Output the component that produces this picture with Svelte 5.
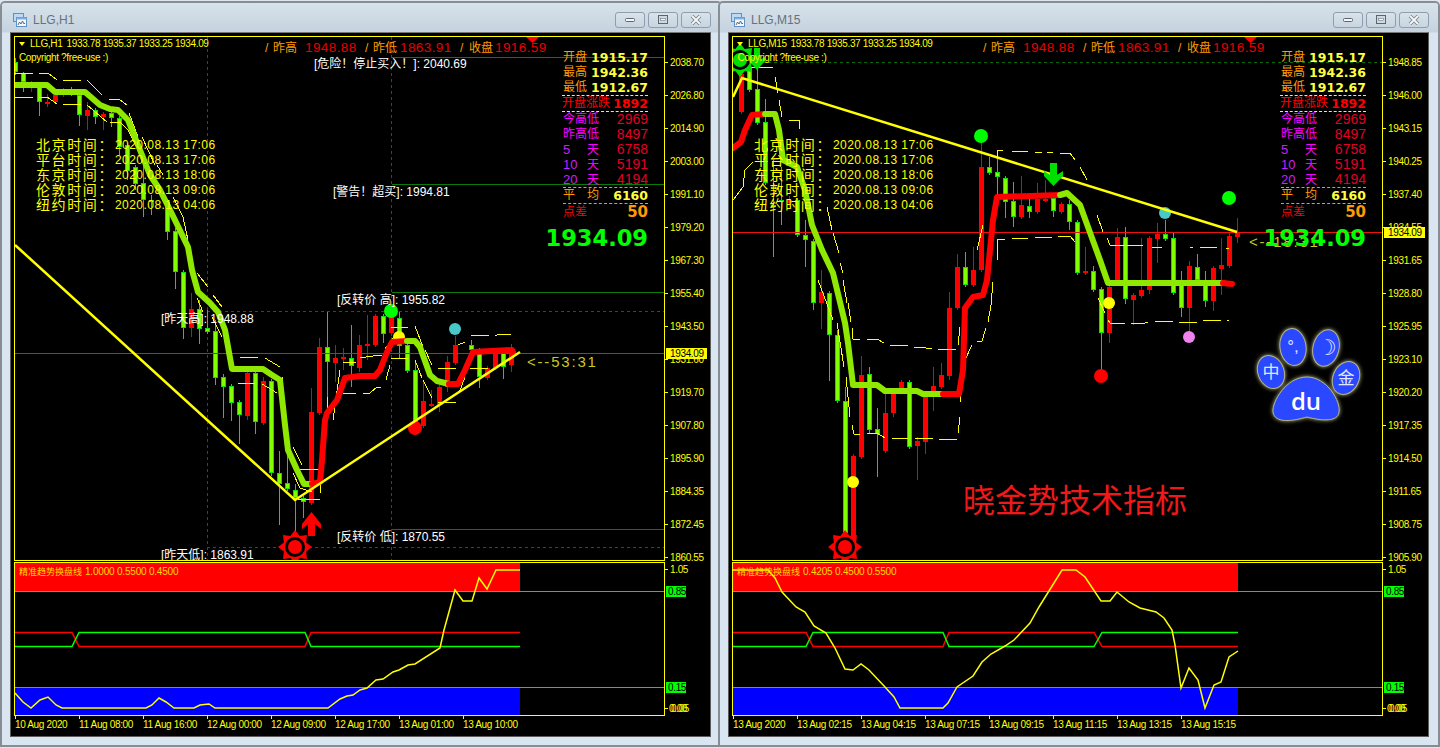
<script lang="ts">
  // MT4 style twin chart windows. Series use page coordinates, the right one is shifted back by 718.
  const statRows = [
    { label: '开盘', value: '1915.17', kind: 'ohlc' },
    { label: '最高', value: '1942.36', kind: 'ohlc' },
    { label: '最低', value: '1912.67', kind: 'ohlc' },
    { label: '开盘涨跌', value: '1892', kind: 'gap' },
    { label: '今高低', value: '2969', kind: 'range' },
    { label: '昨高低', value: '8497', kind: 'range' },
    { num: '5', label: '天', value: '6758', kind: 'range' },
    { num: '10', label: '天', value: '5191', kind: 'range' },
    { num: '20', label: '天', value: '4194', kind: 'range' },
    { num: '平', label: '均', value: '6160', kind: 'avg' },
    { label: '点差', value: '50', kind: 'spread' }
  ];

  const clockRows = [
    ['北京时间：', '2020.08.13 17:06'],
    ['平台时间：', '2020.08.13 17:06'],
    ['东京时间：', '2020.08.13 18:06'],
    ['伦敦时间：', '2020.08.13 09:06'],
    ['纽约时间：', '2020.08.13 04:06']
  ];

  // [colour, x, bodyTop, bodyBottom, wickTop, wickBottom]
  const leftCandles = [
    ['g',15,62,72,58,75],['g',23,73,82,72,92],['r',31,85,86,81,92],['g',39,84,102,82,116],['r',47,102,103,94,107],
    ['r',55,95,102,92,104],['r',63,91,92,88,97],['g',71,91,92,87,96],['g',79,95,115,93,126],['r',87,110,116,102,130],
    ['g',95,110,117,108,124],['r',103,114,117,112,130],['g',111,113,118,111,127],['g',119,118,147,116,155],['g',127,145,171,143,180],
    ['g',135,167,184,165,190],['g',143,183,200,160,217],['g',151,200,202,195,215],['g',167,202,232,200,240],['g',175,231,272,228,289],
    ['g',183,272,328,270,339],['r',191,309,328,293,337],['g',199,309,329,300,344],['g',207,328,332,310,334],['g',215,331,378,320,385],
    ['g',223,377,387,374,418],['g',231,386,403,384,421],['g',239,402,415,400,444],['r',247,373,416,371,420],['g',255,373,422,371,434],
    ['r',263,381,423,377,425],['g',271,381,473,379,476],['g',279,473,484,451,525],['g',287,483,489,451,491],['g',295,490,498,484,540],
    ['g',303,498,502,496,518],['r',311,412,503,388,505],['r',319,347,413,338,415],['g',327,347,362,312,415],['r',335,358,363,345,382],
    ['r',343,357,359,348,370],['g',351,358,366,325,387],['r',359,345,368,335,372],['r',367,344,346,315,360],['r',375,316,345,314,347],
    ['g',383,316,334,314,343],['r',391,316,333,314,336],['g',399,318,346,312,358],['g',407,345,371,343,373],['g',415,370,422,360,424],
    ['r',423,401,426,382,428],['r',431,404,406,390,407],['r',439,387,405,385,412],['r',447,362,387,356,392],['r',455,345,363,336,365],
    ['g',471,345,350,340,352],['g',479,350,377,348,388],['r',487,368,378,366,380],['r',495,353,368,351,370],['g',503,353,367,351,379],
    ['r',511,349,365,344,372]
  ];

  const rightCandles = [
    ['r',741,74,112,70,114],['g',749,67,90,55,92],['g',757,89,123,48,125],['g',765,122,183,99,185],['g',773,205,207,160,257],
    ['g',781,200,202,167,225],['r',789,200,203,196,205],['g',797,200,235,198,237],['g',805,235,240,220,267],['g',813,241,303,239,310],
    ['r',821,292,303,270,329],['g',829,293,335,291,381],['g',837,335,401,330,403],['g',845,401,533,387,535],['r',853,456,540,454,542],
    ['r',861,375,457,356,459],['g',869,374,430,367,434],['g',877,429,434,408,477],['r',885,413,451,393,453],['r',893,393,413,391,417],
    ['r',901,382,388,380,390],['g',909,382,447,380,449],['r',917,441,446,437,480],['r',925,397,442,395,454],['r',933,386,391,367,411],
    ['r',941,375,387,363,389],['r',949,308,376,292,380],['r',957,267,308,254,310],['g',965,267,285,252,287],['r',973,270,285,247,287],
    ['r',981,167,270,143,272],['g',989,167,173,157,175],['g',997,172,177,157,195],['g',1005,178,202,176,218],['g',1013,201,217,182,227],
    ['r',1021,205,217,176,219],['g',1029,206,212,197,218],['r',1037,199,212,183,214],['r',1045,199,200,180,202],['g',1053,198,211,196,217],
    ['r',1061,204,212,202,214],['g',1069,204,222,200,230],['g',1077,222,273,220,275],['r',1085,271,273,247,275],['g',1093,271,290,266,292],
    ['g',1101,289,333,287,370],['r',1109,287,333,285,343],['r',1117,237,283,228,285],['g',1125,237,299,227,304],['r',1133,295,300,293,325],
    ['r',1141,290,296,238,298],['r',1149,238,290,236,294],['r',1157,234,239,223,263],['g',1165,234,239,220,241],['g',1173,238,293,233,295],
    ['g',1181,280,308,271,317],['r',1189,266,308,261,337],['g',1197,267,280,254,282],['g',1205,280,301,271,307],['r',1213,268,301,266,311],
    ['r',1221,265,269,238,295],['r',1229,236,266,232,268],['r',1237,233,237,218,243]
  ];

  const leftThin = [
    [15,97,33,97],[15,73,33,73],[39,73,48,73,57,80],[63,80,81,80],[87,80,102,95],[109,99,119,99,127,105],[129,113,138,137],
    [142,137,155,165],[157,165,163,175],[173,197,183,217,188,240],[39,97,47,97,57,104],[63,104,81,104],[87,105,107,122],
    [110,122,120,122,128,130],[128,130,142,157],[197,273,208,287],[213,295,222,307],[197,298,203,312],[212,317,222,337],
    [225,340,230,367],[240,357,258,357],[265,358,280,367],[238,383,255,383],[262,384,277,393],[282,377,287,437],[293,447,302,465],
    [293,473,300,488,312,492],[298,469,319,469],[298,499,320,499],[320,483,320,493],[320,470,325,440,328,397],[333,420,340,370],
    [343,393,356,393],[343,362,356,362],[363,393,370,393,377,387,381,387],[360,358,373,356,382,355],[386,380,390,365],[385,349,393,338],
    [391,327,408,327],[391,358,408,358],[415,326,423,347],[425,350,432,365],[415,360,422,378],[423,380,432,398],[438,368,456,368],
    [438,402,456,402],[458,345,465,342],[459,393,465,377],[471,336,489,335],[495,336,499,334,511,334],[470,368,488,368]
  ];

  const rightThin = [
    [749,78,750,67,773,67],[775,77,778,93],[779,100,782,117],[789,120,799,120,800,129],[733,200,743,187,745,170,753,162],
    [827,207,832,230],[833,233,839,253],[840,263,843,273],[843,280,847,303],[848,303,851,322],[852,328,853,339,860,339],
    [867,339,877,339,884,343],[890,345,908,345],[914,347,920,347,932,349],[938,349,956,349],[958,345,960,327],[965,360,972,345],
    [977,341,982,341,986,328],[988,322,991,305,993,282],[818,280,833,320],[837,323,844,367],[846,377,850,417],[852,425,854,434,860,434],
    [867,433,877,433,885,438],[892,438,908,438],[915,438,933,439],[939,439,957,439],[958,433,960,417],[960,402,964,370],
    [997,157,997,150,1003,150],[1012,151,1028,152],[1035,152,1042,152],[1047,152,1053,152],[1060,153,1070,153,1075,160],
    [1080,167,1087,180],[1097,215,1103,232],[1107,238,1110,245,1143,245],[1152,247,1162,247],[1190,247,1193,247],[1200,247,1217,248],
    [1226,248,1229,248],[1098,298,1105,313],[1108,320,1110,323,1125,323],[1131,323,1145,323,1148,322],[1155,322,1173,321],
    [1179,322,1197,322],[1203,321,1221,320],[1227,320,1229,320],[997,260,997,239,1005,239],[1012,238,1028,238],[1035,238,1052,237],
    [1058,237,1070,236,1075,242],[977,250,983,225],[805,207,812,213]
  ];

  const windows = [
    {
      title: 'LLG,H1',
      symbol: 'LLG,H1',
      quoteX: 66.5,
      copyX: 19,
      offset: 0,
      candles: leftCandles,
      thin: leftThin,
      trend: [
        ['#8fe800', [15,85,47,85,55,92,85,92,100,105,110,109,118,110,128,120,140,150,150,175,160,190,172,214,188,247,192,270,198,292,210,303,218,312,225,330,232,369,263,369,272,375,280,380,285,425,288,450,297,470,304,484,311,484]],
        ['#ff0000', [312,484,320,482,322,460,325,420,327,413,337,400,345,378,360,376,375,376,380,370,387,352,392,342,407,341]],
        ['#8fe800', [407,341,415,341,420,347,430,375,437,381,449,384]],
        ['#ff0000', [449,384,458,384,465,370,473,352,512,350,513,352]]
      ],
      bold: [15,245,295,500,520,352],
      priceY: 353,
      solid: [[392,57],[392,184],[392,292],[392,529]],
      dashed: [[207,311],[207,547]],
      vertical: [207,391],
      labels: [
        [314,64,'[危险！停止买入！]: 2040.69'],
        [333,192,'[警告！超买]: 1994.81'],
        [337,300,'[反转价 高]: 1955.82'],
        [337,537,'[反转价 低]: 1870.55'],
        [161,319,'[昨天高]: 1948.88'],
        [161,555,'[昨天低]: 1863.91']
      ],
      dots: [[391,311,7,'#00ff00'],[399,337,6,'#ffff00'],[455,329,6,'#48c8c8'],[415,428,7,'#ff0000']],
      suns: [[295,547,'#ff0000']],
      arrows: [['#ff0000','311.5,512 321,524 321,529 315,524 315,536 308,536 308,524 302,529 302,524']],
      countdown: ['<--53:31', 527, 362],
      scale: ['2038.70','2026.80','2014.90','2003.00','1991.10','1979.20','1967.30','1955.40','1943.50','1931.60','1919.70','1907.80','1895.90','1884.35','1872.45','1860.55'],
      legend: '1.0000 0.5500 0.4500',
      bandEnd: 520,
      flips: [[15,72,79,305,311,520]],
      osc: [15,693,23,702,31,708,40,700,48,697,56,705,62,708,146,708,152,705,159,698,166,702,174,708,194,708,200,705,209,704,215,708,328,708,340,699,347,696,353,695,360,690,367,688,376,680,383,679,393,672,399,670,408,665,415,664,440,648,444,630,455,590,463,601,472,601,479,578,487,589,496,570,520,570],
      times: ['10 Aug 2020','11 Aug 08:00','11 Aug 16:00','12 Aug 00:00','12 Aug 09:00','12 Aug 17:00','13 Aug 01:00','13 Aug 10:00']
    },
    {
      title: 'LLG,M15',
      symbol: 'LLG,M15',
      quoteX: 72.5,
      copyX: 19.5,
      offset: 718,
      candles: rightCandles,
      thin: rightThin,
      trend: [
        ['#ff0000', [733,148,741,142,745,130,752,115,765,114]],
        ['#8fe800', [765,114,775,114,779,130,783,160,797,167,805,190,812,225,822,250,833,273,845,323,848,343,853,385,877,385,885,391,917,391,923,394,943,394]],
        ['#ff0000', [943,394,959,394,963,370,965,308,973,297,983,295,987,280,993,220,997,197,1060,195]],
        ['#8fe800', [1060,195,1067,193,1080,205,1088,227,1100,260,1108,283,1223,283]],
        ['#ff0000', [1223,283,1232,284]]
      ],
      bold: [733,97,742,78,1237,232],
      priceY: 232,
      solid: [],
      dashed: [[732,62]],
      vertical: [],
      labels: [],
      dots: [[981,136,7,'#00ff00'],[1165,213,6,'#48c8c8'],[1229,198,7,'#00ff00'],[1109,303,6,'#ffff00'],[1189,337,6,'#ee82ee'],[1101,376,7,'#ff0000'],[853,482,6,'#ffff00']],
      suns: [[845,547,'#ff0000'],[740,60,'#00e000']],
      arrows: [
        ['#00e000','1050,163 1057,163 1057,175 1063,171 1063,176 1053.5,186 1044,176 1044,171 1050,175'],
        ['#00e000','754,48 760,48 760,60 765,57 765,61 757,70 749,61 749,57 754,60']
      ],
      countdown: ['<--18:31', 1249, 242],
      scale: ['1948.85','1946.00','1943.15','1940.25','1937.40','1934.55','1931.65','1928.80','1925.95','1923.10','1920.20','1917.35','1914.50','1911.65','1908.75','1905.90'],
      legend: '0.4205 0.4500 0.5500',
      bandEnd: 1238,
      flips: [[733,806,813,943,949,1094,1102,1238]],
      osc: [733,570,768,570,775,578,782,592,796,607,805,612,814,626,826,633,835,648,845,669,853,670,861,664,869,670,885,687,894,697,900,708,943,708,948,703,957,687,973,676,982,662,991,654,1005,646,1014,640,1030,623,1039,607,1062,570,1076,570,1085,577,1101,601,1110,601,1117,592,1129,602,1140,608,1156,612,1164,618,1172,630,1175,645,1181,688,1189,668,1198,680,1205,708,1214,685,1221,682,1229,657,1238,651],
      times: ['13 Aug 2020','13 Aug 02:15','13 Aug 04:15','13 Aug 07:15','13 Aug 09:15','13 Aug 11:15','13 Aug 13:15','13 Aug 15:15']
    }
  ];

  const tickYs = Array.from({ length: 16 }, (_, i) => 62 + i * 33);

  // alternating upper and lower legs of the switch line, starting on the upper leg
  function flipLine(stops, startTop) {
    const top = 632.5;
    const low = 646.5;
    let high = startTop;
    const pts = [stops[0], high ? top : low];
    for (let i = 1; i < stops.length - 1; i += 2) {
      pts.push(stops[i], high ? top : low);
      high = !high;
      pts.push(stops[i + 1], high ? top : low);
    }
    pts.push(stops[stops.length - 1], high ? top : low);
    return pts.join(',');
  }

  function sunPoints(cx, cy) {
    const pts = [];
    for (let i = 0; i < 16; i++) {
      const r = i % 2 ? 12 : 17;
      const a = (i * Math.PI) / 8 - Math.PI / 2;
      pts.push((cx + r * Math.cos(a)).toFixed(1) + ',' + (cy + r * Math.sin(a)).toFixed(1));
    }
    return pts.join(' ');
  }
</script>

{#snippet windowButtons()}
  <div class="buttons">
    <button class="btn" aria-label="minimize">
      <svg width="12" height="8" viewBox="0 0 12 8"><rect x="1.500" y="2.500" width="9" height="3" rx="1" fill="#f4f6f8" stroke="#5b6670" /></svg>
    </button>
    <button class="btn" aria-label="maximize">
      <svg width="12" height="10" viewBox="0 0 12 10"><rect x="1.500" y="0.500" width="9" height="8" fill="#cfd9e2" stroke="#5b6670" /><rect x="3.500" y="3.500" width="5" height="2" fill="#f4f6f8" stroke="#5b6670" stroke-width="0.500" /></svg>
    </button>
    <button class="btn" aria-label="close">
      <svg width="14" height="10" viewBox="0 0 14 10"><path d="M3 1l8 8M11 1l-8 8" stroke="#6f7a85" stroke-width="3.500" /><path d="M3 1l8 8M11 1l-8 8" stroke="#f4f6f8" stroke-width="2" /></svg>
    </button>
  </div>
{/snippet}

{#snippet titleIcon()}
  <svg class="doc-icon" width="14" height="15" viewBox="0 0 14 15">
    <rect x="0.500" y="0.500" width="10" height="8" fill="#bcd9f5" stroke="#5f8fc4" />
    <rect x="3.500" y="4.500" width="10" height="9" fill="#f4f8fc" stroke="#5f8fc4" />
    <rect x="3.500" y="4.500" width="10" height="2" fill="#7fb0e0" />
    <path d="M5 12l1.500-3 1.500 2 1.500-3 1.500 3 1-1" fill="none" stroke="#5a6a7a" />
  </svg>
{/snippet}

{#snippet chartWindow(w)}
  <section class="window">
    <header class="titlebar">
      {@render titleIcon()}
      <span class="title">{w.title}</span>
      {@render windowButtons()}
    </header>
    <div class="chart">
      <svg class="canvas" width="699" height="703" viewBox="11 33 699 703">
        <defs>
          <clipPath id={'main' + w.offset}><rect x="15" y="37" width="649" height="523" /></clipPath>
        </defs>

        <g clip-path={`url(#main${w.offset})`}>
          <g transform={`translate(${-w.offset} 0)`}>
            {#each w.vertical as x}
              <line class="dash" x1={x + 0.5} y1="37" x2={x + 0.5} y2="560" />
            {/each}
            {#each w.dashed as [x, y]}
              <line class="dash" x1={x} y1={y + 0.5} x2={664 + w.offset} y2={y + 0.5} />
            {/each}
            {#each w.solid as [x, y]}
              <line class="level" x1={x} y1={y + 0.5} x2={664 + w.offset} y2={y + 0.5} />
            {/each}

            {#each w.candles as [c, x, t, b, wt, wb]}
              <line class={c === 'g' ? 'wick-g' : 'wick-r'} x1={x + 0.5} y1={wt} x2={x + 0.5} y2={wb} />
              <rect class={c === 'g' ? 'body-g' : 'body-r'} x={x - 1.5} y={t + 0.5} width="4" height={Math.max(b - t - 1, 1)} />
            {/each}

            <line class="price" x1={15 + w.offset} y1={w.priceY + 0.5} x2={664 + w.offset} y2={w.priceY + 0.5} />

            {#each w.dots as [x, y, r, fill]}
              <circle cx={x} cy={y} {r} {fill} />
            {/each}
            {#each w.thin as seg}
              <polyline class="thin" points={seg.join(',')} />
            {/each}
            {#each w.trend as [color, pts]}
              <polyline class="trend" stroke={color} points={pts.join(',')} />
            {/each}
            <polyline class="bold" points={w.bold.join(',')} />

            {#each w.suns as [x, y, color]}
              <polygon points={sunPoints(x, y)} fill={color} />
              <circle cx={x} cy={y} r="10" fill="#000" />
              <circle cx={x} cy={y} r="7" fill={color} />
            {/each}
            {#each w.arrows as [color, pts]}
              <polygon points={pts} fill={color} />
            {/each}

            {#each w.labels as [x, y, text]}
              <text class="level-label" x={x} y={y + 4}>{text}</text>
            {/each}
            <text class="countdown" x={w.countdown[1]} y={w.countdown[2] + 5}>{w.countdown[0]}</text>

            {#if w.offset}
              <text class="brand" x="963" y="512">晓金势技术指标</text>
              <g class="paw">
                <ellipse cx="1271" cy="372" rx="13" ry="17" transform="rotate(-22 1271 372)" />
                <ellipse cx="1293" cy="347" rx="13" ry="18.500" transform="rotate(-8 1293 347)" />
                <ellipse cx="1326" cy="348" rx="13" ry="18.500" transform="rotate(14 1326 348)" />
                <ellipse cx="1346" cy="378" rx="13" ry="17" transform="rotate(24 1346 378)" />
                <path d="M1273 412C1272 402 1286 377 1307 377C1327 377 1341 402 1339 412C1338 422 1322 421 1307 417C1293 421 1275 424 1273 412Z" />
              </g>
              <text class="paw-glyph" x="1271" y="378">中</text>
              <text class="paw-glyph" x="1293" y="352">°,</text>
              <text class="paw-moon" x="1327" y="355">☽</text>
              <text class="paw-glyph" x="1346" y="384">金</text>
              <text class="paw-du" x="1306" y="410">du</text>
            {/if}
          </g>
        </g>

        <polygon points="526,37 539,37 532.500,43" fill="#ff0000" />
        <polygon points="19,42 25,42 22,46" fill="#ffff00" />

        <text class="small" x="30" y="47">{w.symbol}</text>
        <text class="small" x={w.quoteX} y="47">1933.78 1935.37 1933.25 1934.09</text>
        <text class="small" x={w.copyX} y="61">Copyright ?free-use :)</text>

        <text class="head-label" x="265" y="52">/</text>
        <text class="head-label" x="273" y="52">昨高</text>
        <text class="head-value" x="305" y="52">1948.88</text>
        <text class="head-label" x="365" y="52">/</text>
        <text class="head-label" x="373" y="52">昨低</text>
        <text class="head-value" x="400" y="52">1863.91</text>
        <text class="head-label" x="460" y="52">/</text>
        <text class="head-label" x="469" y="52">收盘</text>
        <text class="head-value" x="495" y="52">1916.59</text>

        <rect class="frame" x="14.500" y="36.500" width="650" height="524" />

        {#each w.scale as label, i}
          <line class="tick" x1="664" y1={tickYs[i] + 0.5} x2="668" y2={tickYs[i] + 0.5} />
          <text class="small" x="670" y={tickYs[i] + 3.500}>{label}</text>
        {/each}

        <rect class="price-box" x="666" y={w.priceY - 5} width="41" height="11" />
        <text class="small dark" x="670" y={w.priceY + 3.500}>1934.09</text>

        <!-- sub window -->
        <g transform={`translate(${-w.offset} 0)`}>
          <rect x={15 + w.offset} y="563" width={w.bandEnd - 15 - w.offset} height="28" fill="#ff0000" />
          <rect x={15 + w.offset} y="688" width={w.bandEnd - 15 - w.offset} height="27" fill="#0000ff" />
          <line class="zone" x1={15 + w.offset} y1="591.500" x2={664 + w.offset} y2="591.500" />
          <line class="zone" x1={15 + w.offset} y1="687.500" x2={664 + w.offset} y2="687.500" />
          {#each w.flips as stops}
            <polyline class="flip" stroke="#ff0000" points={flipLine(stops, true)} />
            <polyline class="flip" stroke="#00ff00" points={flipLine(stops, false)} />
          {/each}
          <polyline class="osc" points={w.osc.join(',')} />
        </g>
        <text class="legend" x="19" y="575">精准趋势换盘线</text>
        <text class="legend-num" x="85" y="575">{w.legend}</text>
        <rect class="frame" x="14.500" y="562.500" width="650" height="153" />

        <line class="tick" x1="664" y1="569.500" x2="668" y2="569.500" />
        <text class="small" x="670" y="572.500">1.05</text>
        <rect class="zone-box" x="666" y="586" width="20" height="11" />
        <text class="small dark" x="668" y="595">0.85</text>
        <rect class="zone-box" x="666" y="682" width="20" height="11" />
        <text class="small dark" x="668" y="691">0.15</text>
        <line class="tick" x1="664" y1="708.500" x2="668" y2="708.500" />
        <text class="small" x="669" y="712">0.00</text>
        <text class="small" x="671" y="712">0.05</text>

        {#each w.times as label, i}
          <line class="tick" x1={15.5 + i * 64} y1="715" x2={15.5 + i * 64} y2="719" />
          <text class="small" x={15 + i * 64} y="728">{label}</text>
        {/each}
      </svg>

      <div class="clock">
        {#each clockRows as [city, time]}
          <div class="clock-row"><span class="city">{city}</span><span class="time">{time}</span></div>
        {/each}
      </div>

      <div class="stats">
        {#each statRows as row}
          <div class={'row ' + row.kind}>
            <span class="label">
              {#if row.num}<span class="num">{row.num}</span>{/if}{row.label}
            </span>
            <span class="value">{row.value}</span>
          </div>
        {/each}
        <div class="last-price">1934.09</div>
      </div>
    </div>
  </section>
{/snippet}

<main class="desk">
  {#each windows as w}
    {@render chartWindow(w)}
  {/each}
</main>

<style>
  :global(body) {
    margin: 0;
    background: #dfe5ec;
    overflow: hidden;
  }

  .desk {
    display: flex;
    padding: 3px 0 0 2px;
    height: 745px;
    font-family: "Liberation Sans", "Noto Sans CJK SC", sans-serif;
  }

  .window {
    width: 718px;
    height: 742px;
    box-sizing: border-box;
    padding: 0 8px 8px;
    background: linear-gradient(#d7e2ea, #c5d3df 29px, #d9e6f2 30px);
    box-shadow: 0 0 0 2px #868d95;
    border-radius: 3px 3px 0 0;
    position: relative;
  }

  .titlebar {
    height: 29px;
    box-sizing: border-box;
    padding: 5px 0 0 3px;
    display: flex;
    align-items: center;
    gap: 6px;
  }

  .doc-icon {
    flex: none;
  }

  .title {
    font-size: 12px;
    color: #66717c;
  }

  .buttons {
    margin-left: auto;
    display: flex;
    gap: 3px;
    margin-right: 1px;
  }

  .btn {
    width: 30px;
    height: 16px;
    padding: 0;
    display: flex;
    align-items: center;
    justify-content: center;
    background: linear-gradient(#d8e2ea, #c8d5e0);
    border: 1px solid #8f9dac;
    border-radius: 3px;
  }

  .chart {
    position: relative;
    width: 699px;
    height: 703px;
    background: #000;
    border: 1px solid #5b5b5b;
    border-top-color: #777;
  }

  .canvas {
    display: block;
  }

  .frame {
    fill: none;
    stroke: #ffff00;
  }

  .tick {
    stroke: #ffff00;
  }

  .small {
    font-size: 10px;
    fill: #ffff00;
    letter-spacing: -0.35px;
  }

  .dark {
    fill: #000;
  }

  .price-box {
    fill: #ffff00;
  }

  .zone-box {
    fill: #00ff00;
  }

  .dash {
    stroke: #0a6a0a;
    stroke-dasharray: 3 3;
    shape-rendering: crispEdges;
  }

  .level {
    stroke: #0a7a0a;
    shape-rendering: crispEdges;
  }

  .price {
    stroke: #ee1111;
    shape-rendering: crispEdges;
  }

  .wick-g {
    stroke: #00e800;
    shape-rendering: crispEdges;
  }

  .wick-r {
    stroke: #ee0000;
    shape-rendering: crispEdges;
  }

  .body-g {
    fill: #7fff00;
    stroke: #00e800;
    shape-rendering: crispEdges;
  }

  .body-r {
    fill: #ff0000;
    stroke: #ff0000;
    shape-rendering: crispEdges;
  }

  .thin {
    fill: none;
    stroke: #ffff00;
    shape-rendering: crispEdges;
  }

  .trend {
    fill: none;
    stroke-width: 6;
    stroke-linejoin: round;
    stroke-linecap: round;
  }

  .bold {
    fill: none;
    stroke: #ffff00;
    stroke-width: 2.500;
  }

  .zone {
    stroke: #00e800;
    stroke-width: 1;
    shape-rendering: crispEdges;
  }

  .flip {
    fill: none;
    stroke-width: 1.500;
  }

  .osc {
    fill: none;
    stroke: #ffff00;
    stroke-width: 1.500;
  }

  .legend {
    font-size: 9px;
    fill: #ffd800;
  }

  .legend-num {
    font-size: 10px;
    fill: #ffd800;
    letter-spacing: -0.2px;
  }

  .level-label {
    font-size: 12px;
    fill: #fff;
  }

  .countdown {
    font-size: 15px;
    fill: #c8c820;
    letter-spacing: 1.800px;
  }

  .head-label {
    font-size: 12px;
    fill: #ff9a00;
  }

  .head-value {
    font-size: 13.500px;
    fill: #e60000;
    letter-spacing: 0.400px;
  }

  .brand {
    font-size: 32px;
    fill: #f01818;
  }

  .paw {
    fill: #2a48ff;
    stroke: #b4b48c;
    stroke-width: 1;
    filter: drop-shadow(0 0 2px #b8b880);
  }

  .paw-glyph {
    font-size: 17px;
    fill: #dfe6ff;
    text-anchor: middle;
  }

  .paw-moon {
    font-size: 22px;
    fill: #dfe6ff;
    text-anchor: middle;
  }

  .paw-du {
    font-family: "Open Sans", sans-serif;
    font-size: 24px;
    font-weight: 600;
    fill: #fff;
    text-anchor: middle;
  }

  .clock {
    position: absolute;
    left: 25px;
    top: 105px;
    color: #ffff00;
  }

  .clock-row {
    height: 15px;
    line-height: 15px;
    display: flex;
    white-space: nowrap;
  }

  .city {
    font-size: 14px;
    letter-spacing: 1.600px;
    width: 79px;
  }

  .time {
    font-size: 12px;
    letter-spacing: 0.450px;
  }

  .stats {
    position: absolute;
    left: 552px;
    top: 17px;
    width: 85px;
  }

  .row {
    height: 15px;
    line-height: 15px;
    display: flex;
    justify-content: space-between;
    white-space: nowrap;
    font-size: 12px;
  }

  .num {
    display: inline-block;
    width: 24px;
  }

  .ohlc .label,
  .avg .label {
    color: #ff9a00;
  }

  .ohlc .value,
  .avg .value,
  .gap .value,
  .spread .value {
    font-family: "DejaVu Sans", sans-serif;
    font-weight: 700;
    font-size: 12.500px;
  }

  .ohlc .value,
  .avg .value {
    color: #ffff40;
  }

  .gap {
    height: 15px;
    border-top: 1px dashed #ffdcae;
    border-bottom: 1px dashed #ffdcae;
    color: #ff0000;
    margin-left: -1px;
  }

  .range .label {
    color: #ff00ff;
  }

  .range .num {
    color: #c820ff;
    font-size: 13px;
  }

  .range .value {
    color: #e00028;
    font-size: 14px;
  }

  .avg {
    height: 15px;
    border-top: 1px dashed #40d0d0;
    border-bottom: 1px dashed #40d0d0;
  }

  .spread {
    height: 17px;
    line-height: 17px;
    color: #ff0000;
  }

  .spread .value {
    color: #ff9a00;
    font-size: 15px;
  }

  .last-price {
    margin: 4px 0 0 -24px;
    font-family: "DejaVu Sans", sans-serif;
    font-weight: 700;
    font-size: 22.500px;
    line-height: 26px;
    color: #00ff00;
    text-align: right;
    white-space: nowrap;
  }
</style>
